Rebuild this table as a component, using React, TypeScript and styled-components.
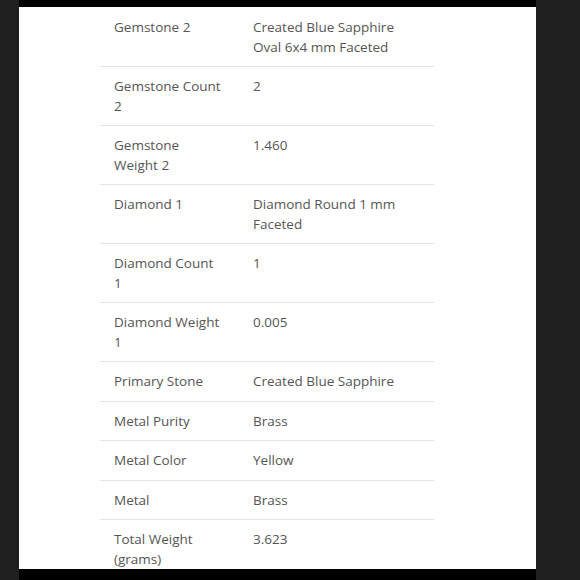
import React from "react";
import styled, { createGlobalStyle } from "styled-components";

const Global = createGlobalStyle`
  html, body { margin: 0; padding: 0; background: #1f1f1f; }
  body { font-family: "Open Sans", "Liberation Sans", sans-serif; }
`;

const Page = styled.div`
  width: 580px;
  height: 580px;
  display: flex;
  background: #1f1f1f;
`;

const Frame = styled.div`
  margin-left: 19px;
  width: 517px;
  height: 580px;
  box-sizing: border-box;
  padding: 7px 0 11px;
  background: #000;
  display: flex;
  flex-direction: column;
`;

const Viewport = styled.div`
  flex: 1;
  background: #fff;
  overflow: hidden;
  padding-top: 1px;
`;

const Table = styled.table`
  margin-left: 81px;
  width: 334px;
  border-collapse: collapse;
  table-layout: fixed;
  font-size: 13.5px;
  line-height: 19.5px;
  color: #555;
`;

const Row = styled.tr`
  border-bottom: 1px solid #e3e3e3;
`;

const Cell = styled.td`
  vertical-align: top;
  padding: 10px 14px 9px;
  white-space: pre-line;
`;

const rows: [string, string][] = [
  ["Gemstone 2", "Created Blue Sapphire\nOval 6x4 mm Faceted"],
  ["Gemstone Count\n2", "2"],
  ["Gemstone\nWeight 2", "1.460"],
  ["Diamond 1", "Diamond Round 1 mm\nFaceted"],
  ["Diamond Count\n1", "1"],
  ["Diamond Weight\n1", "0.005"],
  ["Primary Stone", "Created Blue Sapphire"],
  ["Metal Purity", "Brass"],
  ["Metal Color", "Yellow"],
  ["Metal", "Brass"],
  ["Total Weight\n(grams)", "3.623"],
];

export default function App() {
  return (
    <>
      <Global />
      <Page>
        <Frame>
          <Viewport>
            <Table>
              <colgroup>
                <col style={{ width: 139 }} />
                <col />
              </colgroup>
              <tbody>
                {rows.map(([k, v]) => (
                  <Row key={k}>
                    <Cell>{k}</Cell>
                    <Cell>{v}</Cell>
                  </Row>
                ))}
              </tbody>
            </Table>
          </Viewport>
        </Frame>
      </Page>
    </>
  );
}
